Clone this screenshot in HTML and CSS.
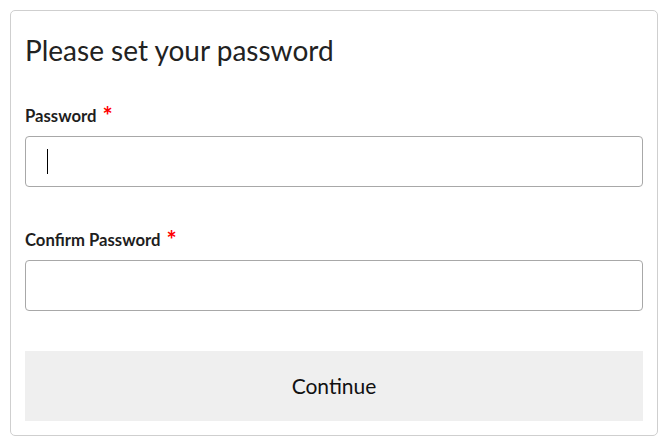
FILE: index.html
```html
<!DOCTYPE html>
<html lang="en">
<head>
<meta charset="utf-8">
<title>Set password</title>
<link rel="stylesheet" href="styles.css">
</head>
<body>
<form class="card">
  <h1 class="title">Please set your password</h1>
  <div class="field field-first">
    <label class="label" for="pw">Password <span class="req">*</span></label>
    <div class="input-wrap">
      <input class="input" id="pw" type="password" autofocus>
      <span class="caret"></span>
    </div>
  </div>
  <div class="field">
    <label class="label" for="pw2">Confirm Password <span class="req">*</span></label>
    <div class="input-wrap">
      <input class="input" id="pw2" type="password">
    </div>
  </div>
  <button class="btn" type="button">Continue</button>
</form>
</body>
</html>
```
FILE: styles.css
```css
html, body {
  margin: 0;
  padding: 0;
  background: #fff;
}
body {
  padding: 10px;
  font-family: Lato, "Noto Sans", sans-serif;
  color: #222;
}
.card {
  width: 618px;
  border: 1px solid #cfcfcf;
  border-radius: 5px;
  padding: 14px;
  display: flex;
  flex-direction: column;
}
.title {
  margin: 7px 0 0;
  font-size: 28px;
  line-height: 36px;
  font-weight: 400;
  color: #222;
}
.field {
  display: flex;
  flex-direction: column;
  margin-top: 43px;
}
.field-first {
  margin-top: 38px;
}
.label {
  font-size: 16.7px;
  line-height: 20px;
  height: 20px;
  font-weight: 700;
  color: #1e1e1e;
  margin-bottom: 10px;
}
.req {
  color: #f00;
  font-size: 24px;
  margin-left: 2px;
  line-height: 0;
  vertical-align: -3px;
}
.input-wrap {
  position: relative;
  display: flex;
}
.input {
  box-sizing: border-box;
  height: 51px;
  width: 100%;
  border: 1px solid #a8a8a8;
  border-radius: 4px;
  padding: 0 21px;
  font-size: 22px;
  font-family: Lato, sans-serif;
  caret-color: transparent;
  outline: none;
  background: #fff;
}
.caret {
  position: absolute;
  left: 22px;
  top: 13px;
  width: 1px;
  height: 25px;
  background: #000;
}
.btn {
  margin-top: 40px;
  height: 70px;
  border: none;
  background: #efefef;
  font-family: Lato, "Noto Sans", sans-serif;
  font-size: 21px;
  line-height: 70px;
  padding: 0 0 2px;
  color: #111;
  cursor: pointer;
}
```
